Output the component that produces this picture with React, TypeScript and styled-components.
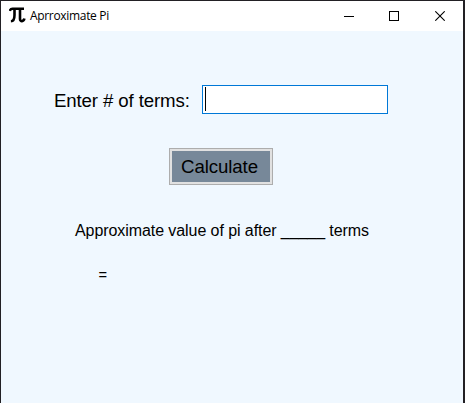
import React from 'react';
import styled, { createGlobalStyle } from 'styled-components';

const GlobalStyle = createGlobalStyle`
  * { box-sizing: border-box; }
  html, body { margin: 0; padding: 0; overflow: hidden; background: #1e1e1e; }
`;

const Window = styled.main`
  display: flex;
  flex-direction: column;
  width: 465px;
  height: 403px;
  border: solid #222024;
  border-width: 1px 2px 0 1px;
  background: #f0f8ff;
  color: #000;
  font-family: "Liberation Sans", Arial, sans-serif;
`;

const TitleBar = styled.header`
  display: flex;
  align-items: center;
  flex: 0 0 30px;
  padding-left: 8px;
  background: #fff;
`;

const Title = styled.h1`
  flex: 1;
  margin: 0 0 0 4px;
  font: 400 12px/16px "Open Sans", "Noto Sans", sans-serif;
  letter-spacing: -0.32px;
  white-space: nowrap;
`;

const Controls = styled.div`
  display: grid;
  grid-template-columns: 44px 46px 46px;
  width: 136px;
  svg { display: block; }
`;

const WindowButton = styled.button`
  display: flex;
  align-items: center;
  justify-content: center;
  height: 30px;
  padding: 0;
  border: 0;
  background: transparent;
`;

const Form = styled.form`
  display: flex;
  flex-direction: column;
  flex: 1;
  padding-top: 54px;
`;

const TermsRow = styled.div`
  display: flex;
  align-items: center;
  height: 29px;
`;

const Label = styled.label`
  width: 148px;
  margin-left: 53px;
  padding-top: 2px;
  font-size: 18.67px;
  line-height: 22px;
  letter-spacing: -0.13px;
  white-space: nowrap;
`;

const TermsInput = styled.div`
  width: 186px;
  height: 29px;
  padding: 1px 2px;
  border: 1px solid #0078d7;
  background: #fff;
`;

const Caret = styled.span`
  display: block;
  width: 1px;
  height: 24px;
  background: #000;
`;

const CalculateButton = styled.button`
  width: 104px;
  height: 37px;
  margin: 34px 0 0 168px;
  padding: 0 3px 0 0;
  border: 1px solid #adadad;
  background: #778899;
  box-shadow: inset 0 0 0 2px #e1e1e1;
  color: #000;
  font: 18.67px/22px "Liberation Sans", Arial, sans-serif;
  letter-spacing: -0.1px;
  white-space: nowrap;
`;

const Result = styled.p<{ $indent: number; $gap: number; $size?: number }>`
  margin: ${({ $gap }) => $gap}px 0 0 ${({ $indent }) => $indent}px;
  font-size: ${({ $size = 16 }) => $size}px;
  line-height: 20px;
  letter-spacing: -0.075px;
  white-space: nowrap;
`;

const PiIcon = () => (
  <svg width="17" height="18" viewBox="0 0 17 18" fill="none" stroke="#000">
    <path d="M.8 4C1.2 2.3 2 1.7 3.5 1.7H15" strokeWidth="2.5" />
    <path d="M5.5 2v6c0 3.6-.8 6.2-3.6 6.3" strokeWidth="2.6" />
    <path d="M11 2v10c0 2.9 3.8 2.8 4.4-.4" strokeWidth="2.6" />
  </svg>
);

export default function App() {
  return (
    <>
      <GlobalStyle />
      <Window>
        <TitleBar>
          <PiIcon />
          <Title>Aprroximate Pi</Title>
          <Controls>
            <WindowButton type="button" aria-label="Minimize">
              <svg width="10" height="10" shapeRendering="crispEdges"><path d="M0 5.5h10" stroke="#000" /></svg>
            </WindowButton>
            <WindowButton type="button" aria-label="Maximize">
              <svg width="10" height="10" shapeRendering="crispEdges"><path d="M.5.5h9v9h-9z" fill="none" stroke="#000" /></svg>
            </WindowButton>
            <WindowButton type="button" aria-label="Close">
              <svg width="10" height="10"><path d="M.3.3l9.4 9.4M9.7.3.3 9.7" stroke="#000" strokeWidth="1.1" /></svg>
            </WindowButton>
          </Controls>
        </TitleBar>
        <Form>
          <TermsRow>
            <Label>Enter # of terms:</Label>
            <TermsInput role="textbox" aria-label="Number of terms"><Caret /></TermsInput>
          </TermsRow>
          <CalculateButton type="button">Calculate</CalculateButton>
          <Result $indent={74} $gap={36}>Approximate value of pi after _____ terms</Result>
          <Result $indent={97.5} $gap={24} $size={14.67}>=</Result>
        </Form>
      </Window>
    </>
  );
}
